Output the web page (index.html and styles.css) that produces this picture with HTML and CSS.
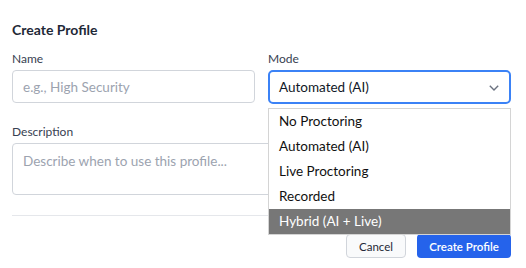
FILE: index.html
```html
<!DOCTYPE html>
<html>
<head>
<meta charset="utf-8">
<link rel="stylesheet" href="styles.css">
</head>
<body>
<div class="panel">
  <h2 class="title">Create Profile</h2>
  <div class="row">
    <div class="field">
      <label class="label">Name</label>
      <div class="input placeholder">e.g., High Security</div>
    </div>
    <div class="field mode">
      <label class="label">Mode</label>
      <div class="select">
        <span>Automated (AI)</span>
        <svg class="chev" width="10" height="6" viewBox="0 0 10 6"><path d="M0.8 0.8 L5 5 L9.2 0.8" fill="none" stroke="#6b7280" stroke-width="1.4"/></svg>
      </div>
      <ul class="menu">
        <li>No Proctoring</li>
        <li>Automated (AI)</li>
        <li>Live Proctoring</li>
        <li>Recorded</li>
        <li class="active">Hybrid (AI + Live)</li>
      </ul>
    </div>
  </div>
  <div class="field desc">
    <label class="label">Description</label>
    <div class="textarea placeholder">Describe when to use this profile...</div>
  </div>
  <div class="footer">
    <button class="btn cancel">Cancel</button>
    <button class="btn primary">Create Profile</button>
  </div>
</div>
</body>
</html>
```
FILE: styles.css
```css
* { box-sizing: border-box; }
body {
  margin: 0;
  background: #fff;
  font-family: "Lato", "Noto Sans", sans-serif;
  color: #111827;
}
.panel {
  width: 523px;
  padding: 20px 12px 0 12px;
}
.title {
  margin: 0;
  font-size: 14px;
  font-weight: 700;
  line-height: 20px;
  color: #1f2937;
}
.row {
  display: grid;
  grid-template-columns: 243px 243px;
  column-gap: 13px;
  margin-top: 11px;
}
.field { display: flex; flex-direction: column; }
.mode { position: relative; }
.label {
  font-size: 12px;
  line-height: 16px;
  color: #374151;
  margin-bottom: 3px;
}
.input, .select, .textarea {
  border: 1px solid #d1d5db;
  border-radius: 4px;
  font-size: 13.5px;
  padding: 0 10px;
}
.input { height: 33px; display: flex; align-items: center; }
.placeholder { color: #9ca3af; }
.select {
  height: 34px;
  border: 2px solid #3b82f6;
  border-radius: 5px;
  display: flex;
  align-items: center;
  justify-content: space-between;
  color: #111827;
  padding: 0 10px 0 9px;
}
.chev { margin-top: 1px; }
.menu {
  position: absolute;
  left: 0;
  top: 57px;
  width: 243px;
  margin: 0;
  padding: 0;
  list-style: none;
  background: #fff;
  border: 1px solid #d4d4d4;
  font-size: 13.5px;
  color: #111;
  z-index: 2;
}
.menu li {
  height: 25px;
  line-height: 25px;
  padding-left: 10px;
}
.menu li.active { background: #777; color: #fff; }
.desc { margin-top: 20px; }
.textarea {
  height: 52px;
  padding-top: 8px;
  line-height: 18px;
}
.footer {
  margin-top: 20px;
  border-top: 1px solid #e5e7eb;
  padding-top: 18px;
  display: flex;
  justify-content: flex-end;
  gap: 11px;
}
.btn {
  height: 24px;
  font-family: inherit;
  font-size: 11.5px;
  border-radius: 4px;
  padding: 0 6px;
}
.cancel {
  background: #f9fafb;
  border: 1px solid #d1d5db;
  color: #1f2937;
  width: 60px;
}
.primary {
  background: #2563eb;
  border: none;
  color: #fff;
  width: 94px;
  font-weight: 600;
}
```
